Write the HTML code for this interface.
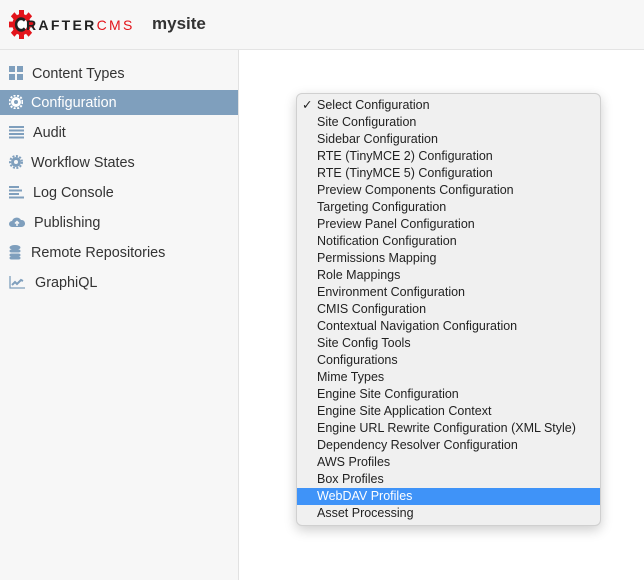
<!DOCTYPE html>
<html><head><style>
*{margin:0;padding:0;box-sizing:border-box}
body{width:644px;height:580px;overflow:hidden;background:#fff;font-family:"Liberation Sans",sans-serif;position:relative}
.hdr{position:absolute;left:0;top:0;width:644px;height:50px;background:#f7f7f7;border-bottom:1px solid #e4e4e4}
.side{position:absolute;left:0;top:50px;width:239px;height:530px;background:#f7f7f7;border-right:1px solid #e2e2e2}
.it{position:absolute;left:0;width:238px;height:25px;font-size:14.4px;color:#333;line-height:25px}
.it span{position:absolute;left:32px;top:1px}
.it svg{position:absolute;left:9px;top:5px}
.sel{background:#7f9fbd;color:#fff}
.menu{position:absolute;left:296px;top:93px;width:305px;height:433px;background:#f0f0f0;border:1px solid #d0d0d0;border-radius:6px;box-shadow:0 4px 12px rgba(0,0,0,.2)}
.o{position:absolute;left:0;width:303px;height:17px;font-size:12.5px;color:#222;line-height:17px;padding-left:20px}
.hl{background:#3f93f8;color:#fff}
</style></head><body>
<div class="hdr">
<svg style="position:absolute;left:9px;top:10px" width="25" height="29" viewBox="0 0 30 30" preserveAspectRatio="none"><g fill="#e3141b"><circle cx="15" cy="15" r="11"/><g transform="translate(15 15)"><rect x="-3" y="-15" width="6" height="30"/><rect x="-3" y="-15" width="6" height="30" transform="rotate(45)"/><rect x="-3" y="-15" width="6" height="30" transform="rotate(90)"/><rect x="-3" y="-15" width="6" height="30" transform="rotate(135)"/></g></g><circle cx="15" cy="15" r="7" fill="#fff"/><path d="M19 11 A6 6 0 1 0 19 19" stroke="#222" stroke-width="3" fill="none"/></svg>
<div style="position:absolute;left:26px;top:17px;font-size:14px;letter-spacing:2.3px;color:#222;font-weight:bold">RAFTER<span style="color:#e3141b;font-weight:normal">CMS</span></div>
<div style="position:absolute;left:152px;top:14px;font-size:17px;font-weight:bold;color:#333">mysite</div>
</div>
<div class="side">
<div class="it" style="top:11px"><svg width="14" height="14"><g fill="#7f9fbd"><rect x="0" y="0" width="6" height="6"/><rect x="8" y="0" width="6" height="6"/><rect x="0" y="8" width="6" height="6"/><rect x="8" y="8" width="6" height="6"/></g></svg><span>Content Types</span></div>
<div class="it sel" style="top:40px"><svg width="14" height="14"><circle cx="7" cy="7" r="5" fill="#fff"/><circle cx="7" cy="7" r="6.5" fill="none" stroke="#fff" stroke-width="2" stroke-dasharray="2 1.5"/><circle cx="7" cy="7" r="2" fill="#7f9fbd"/></svg><span style="left:31px">Configuration</span></div>
<div class="it" style="top:70px"><svg width="15" height="14"><g fill="#7f9fbd"><rect y="1" width="15" height="2"/><rect y="4.5" width="15" height="2"/><rect y="8" width="15" height="2"/><rect y="11.5" width="15" height="2"/></g></svg><span style="left:33px">Audit</span></div>
<div class="it" style="top:100px"><svg width="14" height="14"><circle cx="7" cy="7" r="5" fill="#7f9fbd"/><circle cx="7" cy="7" r="6" fill="none" stroke="#7f9fbd" stroke-width="2" stroke-dasharray="2 1.5"/><circle cx="7" cy="7" r="2" fill="#f7f7f7"/></svg><span style="left:31px">Workflow States</span></div>
<div class="it" style="top:130px"><svg width="15" height="14"><g fill="#7f9fbd"><rect y="1" width="10" height="2"/><rect y="4.5" width="13" height="2"/><rect y="8" width="10" height="2"/><rect y="11.5" width="15" height="2"/></g></svg><span style="left:33px">Log Console</span></div>
<div class="it" style="top:160px"><svg width="16" height="14"><path d="M3 12 A3 3 0 0 1 3 6 A5 5 0 0 1 12 5 A3.5 3.5 0 0 1 13 12 Z" fill="#7f9fbd"/><path d="M8 11V7M6 8.5L8 6.5L10 8.5" stroke="#f7f7f7" stroke-width="1.5" fill="none"/></svg><span style="left:34px">Publishing</span></div>
<div class="it" style="top:190px"><svg width="14" height="15"><g fill="#7f9fbd"><ellipse cx="6" cy="2.5" rx="5.5" ry="2.5"/><rect x="0.5" y="4.5" width="11" height="3" rx="2"/><rect x="0.5" y="8.5" width="11" height="3" rx="2"/><rect x="0.5" y="11.5" width="11" height="3" rx="2"/></g></svg><span style="left:31px">Remote Repositories</span></div>
<div class="it" style="top:220px"><svg width="16" height="14"><path d="M1 1V13H16" stroke="#7f9fbd" stroke-width="1.3" fill="none"/><path d="M3 10L6 7L8 9L12 5L14 6" stroke="#7f9fbd" stroke-width="2" fill="none"/></svg><span style="left:35px">GraphiQL</span></div>
</div>
<div class="menu">
<div class="o" style="top:3px"><span style="position:absolute;left:5px">✓</span>Select Configuration</div>
<div class="o" style="top:20px">Site Configuration</div>
<div class="o" style="top:37px">Sidebar Configuration</div>
<div class="o" style="top:54px">RTE (TinyMCE 2) Configuration</div>
<div class="o" style="top:71px">RTE (TinyMCE 5) Configuration</div>
<div class="o" style="top:88px">Preview Components Configuration</div>
<div class="o" style="top:105px">Targeting Configuration</div>
<div class="o" style="top:122px">Preview Panel Configuration</div>
<div class="o" style="top:139px">Notification Configuration</div>
<div class="o" style="top:156px">Permissions Mapping</div>
<div class="o" style="top:173px">Role Mappings</div>
<div class="o" style="top:190px">Environment Configuration</div>
<div class="o" style="top:207px">CMIS Configuration</div>
<div class="o" style="top:224px">Contextual Navigation Configuration</div>
<div class="o" style="top:241px">Site Config Tools</div>
<div class="o" style="top:258px">Configurations</div>
<div class="o" style="top:275px">Mime Types</div>
<div class="o" style="top:292px">Engine Site Configuration</div>
<div class="o" style="top:309px">Engine Site Application Context</div>
<div class="o" style="top:326px">Engine URL Rewrite Configuration (XML Style)</div>
<div class="o" style="top:343px">Dependency Resolver Configuration</div>
<div class="o" style="top:360px">AWS Profiles</div>
<div class="o" style="top:377px">Box Profiles</div>
<div class="o hl" style="top:394px">WebDAV Profiles</div>
<div class="o" style="top:411px">Asset Processing</div>
</div>
</body></html>
